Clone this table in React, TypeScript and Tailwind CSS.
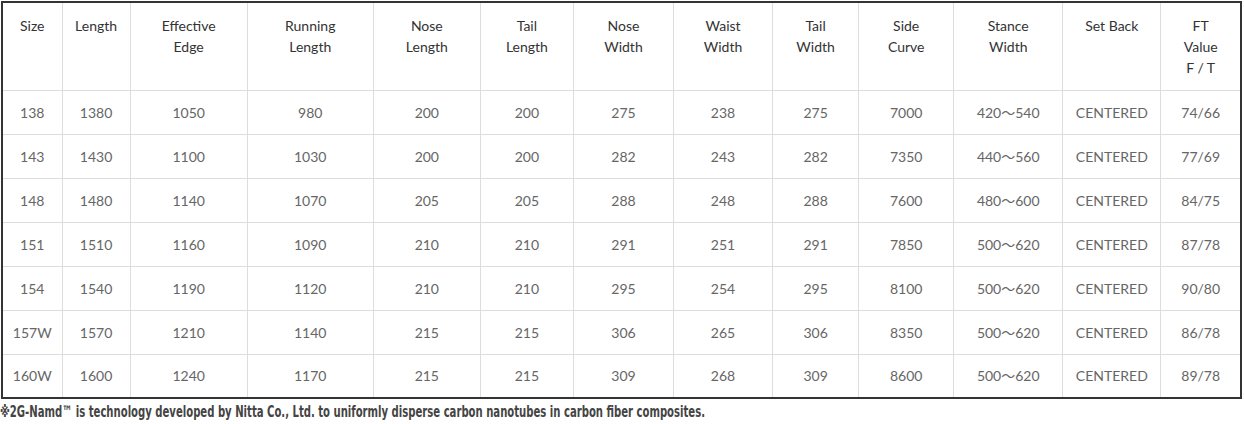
const headers: string[][] = [
  ['Size'],
  ['Length'],
  ['Effective', 'Edge'],
  ['Running', 'Length'],
  ['Nose', 'Length'],
  ['Tail', 'Length'],
  ['Nose', 'Width'],
  ['Waist', 'Width'],
  ['Tail', 'Width'],
  ['Side', 'Curve'],
  ['Stance', 'Width'],
  ['Set Back'],
  ['FT', 'Value', 'F / T'],
]

const widths = [60, 68, 117, 126, 107, 93, 100, 99, 86, 95, 109, 98, 80]

const rows: string[][] = [
  ['138', '1380', '1050', '980', '200', '200', '275', '238', '275', '7000', '420～540', 'CENTERED', '74/66'],
  ['143', '1430', '1100', '1030', '200', '200', '282', '243', '282', '7350', '440～560', 'CENTERED', '77/69'],
  ['148', '1480', '1140', '1070', '205', '205', '288', '248', '288', '7600', '480～600', 'CENTERED', '84/75'],
  ['151', '1510', '1160', '1090', '210', '210', '291', '251', '291', '7850', '500～620', 'CENTERED', '87/78'],
  ['154', '1540', '1190', '1120', '210', '210', '295', '254', '295', '8100', '500～620', 'CENTERED', '90/80'],
  ['157W', '1570', '1210', '1140', '215', '215', '306', '265', '306', '8350', '500～620', 'CENTERED', '86/78'],
  ['160W', '1600', '1240', '1170', '215', '215', '309', '268', '309', '8600', '500～620', 'CENTERED', '89/78'],
]

export default function App() {
  return (
    <div className="h-[424px] w-[1244px] overflow-hidden bg-white pl-px pt-px">
      <table className="w-[1241px] table-fixed border-collapse border-2 border-[#333] font-['Lato','Noto_Sans_CJK_JP',sans-serif] text-[14px]">
        <colgroup>
          {widths.map((w, i) => (
            <col key={i} style={{ width: w }} />
          ))}
        </colgroup>
        <thead>
          <tr className="h-[88px]">
            {headers.map((lines, i) => (
              <th
                key={i}
                className="border border-[#ddd] px-1 pt-[12px] pb-2 align-top text-center font-normal leading-[21px] text-[#333]"
              >
                {lines.map((l) => (
                  <div key={l}>{l}</div>
                ))}
              </th>
            ))}
          </tr>
        </thead>
        <tbody>
          {rows.map((row, r) => (
            <tr key={r} className="h-[44px]">
              {row.map((cell, c) => (
                <td key={c} className="border border-[#ddd] px-1 text-center align-middle text-[#666]">
                  {cell}
                </td>
              ))}
            </tr>
          ))}
        </tbody>
      </table>
      <p className="-ml-px mt-[2px] inline-block origin-left scale-x-[0.7] whitespace-nowrap font-['DejaVu_Sans_Condensed','DejaVu_Sans',sans-serif] text-[16px] font-bold leading-[20px] text-[#444] [font-stretch:condensed]">
        ※2G-Namd™ is technology developed by Nitta Co., Ltd. to uniformly disperse carbon nanotubes in carbon fiber composites.
      </p>
    </div>
  )
}
